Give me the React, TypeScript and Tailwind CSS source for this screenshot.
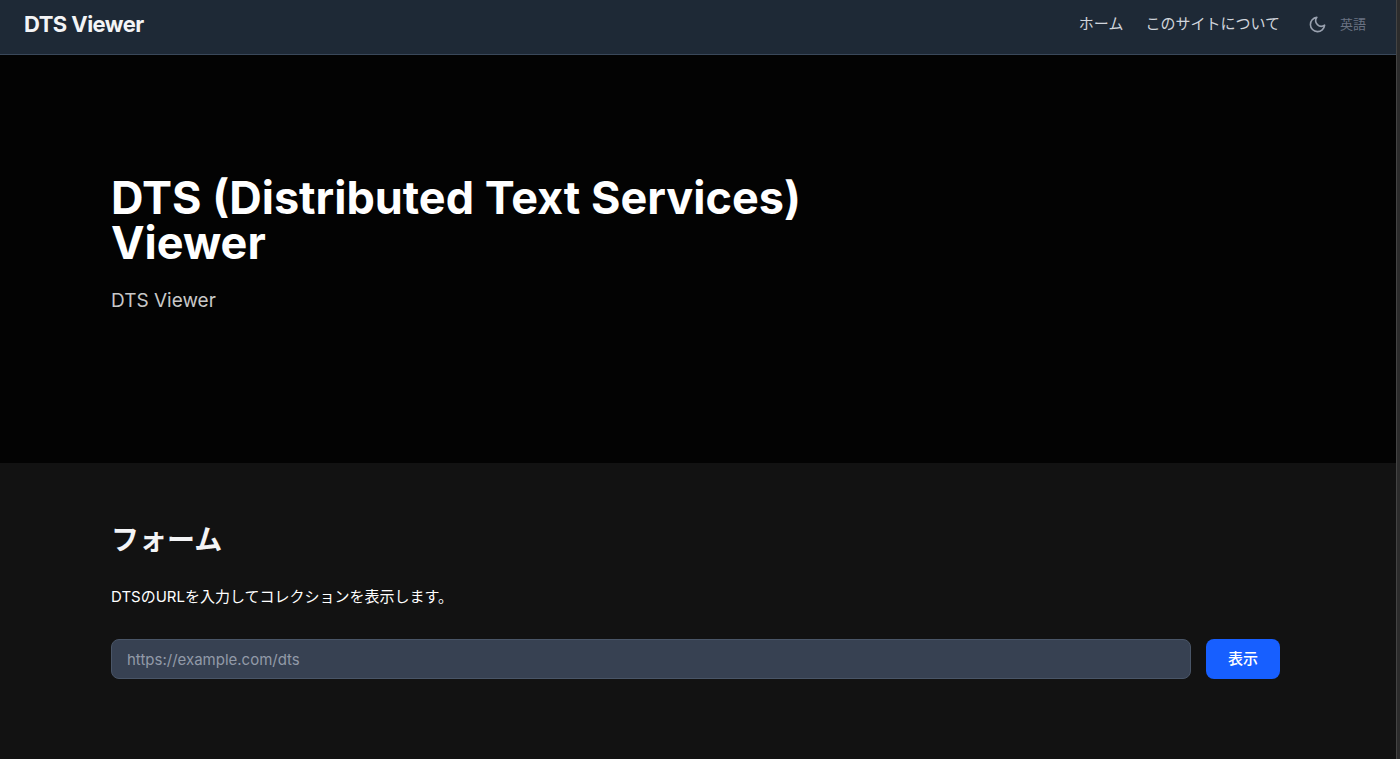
import { useState } from "react";
import type { FormEvent } from "react";
import { FiMoon } from "react-icons/fi";

const navLinks = [
  { href: "#home", label: "ホーム" },
  { href: "#about", label: "このサイトについて" },
];

function Header() {
  return (
    <header className="flex items-center justify-between border-b border-[#3a485a] bg-[#1e2936] pt-[7px] pr-[30px] pb-[13px] pl-6">
      <a href="#home" className="text-[22px] leading-[34px] font-bold tracking-tight text-gray-100">
        DTS Viewer
      </a>
      <div className="flex items-center gap-7">
        <nav className="flex items-center gap-[22px]">
          {navLinks.map((link) => (
            <a key={link.href} href={link.href} className="text-[15px] leading-6 text-gray-300">
              {link.label}
            </a>
          ))}
        </nav>
        <div className="flex items-center gap-[13px]">
          <button type="button" aria-label="テーマ" className="text-gray-400">
            <FiMoon className="size-[19px]" />
          </button>
          <a href="#en" className="text-[13px] leading-6 text-gray-500">
            英語
          </a>
        </div>
      </div>
    </header>
  );
}

function Hero() {
  return (
    <section className="bg-[#030303] pt-30 pr-29 pb-37 pl-[111px]">
      <div className="max-w-3xl">
        <h1 className="text-[45px] leading-[45px] font-bold text-white">
          DTS (Distributed Text Services) Viewer
        </h1>
        <p className="mt-[22px] text-[19px] leading-7 text-[#c8c8c8]">DTS Viewer</p>
      </div>
    </section>
  );
}

function UrlForm() {
  const [url, setUrl] = useState("");

  const handleSubmit = (e: FormEvent) => {
    e.preventDefault();
  };

  return (
    <section className="pt-14 pr-29 pb-20 pl-[111px]">
      <h2 className="text-[28px] leading-[42px] font-bold text-gray-100">フォーム</h2>
      <p className="mt-6 text-[15px] leading-6 text-white">
        <label htmlFor="dts-url">DTSのURLを入力してコレクションを表示します。</label>
      </p>
      <form onSubmit={handleSubmit} className="mt-[30px] flex gap-[15px]">
        <input
          id="dts-url"
          type="text"
          value={url}
          onChange={(e) => setUrl(e.target.value)}
          placeholder="https://example.com/dts"
          className="h-10 min-w-0 flex-1 rounded-lg border border-[#495567] bg-[#374152] px-[15px] text-[15px] text-white placeholder:text-[#929aa8]"
        />
        <button
          type="submit"
          className="h-10 rounded-lg bg-[#175fff] px-[22px] text-[15px] font-medium text-white"
        >
          表示
        </button>
      </form>
    </section>
  );
}

export default function App() {
  return (
    <div className="flex min-h-screen bg-[#2c2c2c] font-['Inter','Noto_Sans_CJK_JP',sans-serif]">
      <div className="min-w-0 flex-1 bg-[#121212]">
        <Header />
        <main>
          <Hero />
          <UrlForm />
        </main>
      </div>
      <div className="w-1 border-l border-[#444444]" />
    </div>
  );
}
